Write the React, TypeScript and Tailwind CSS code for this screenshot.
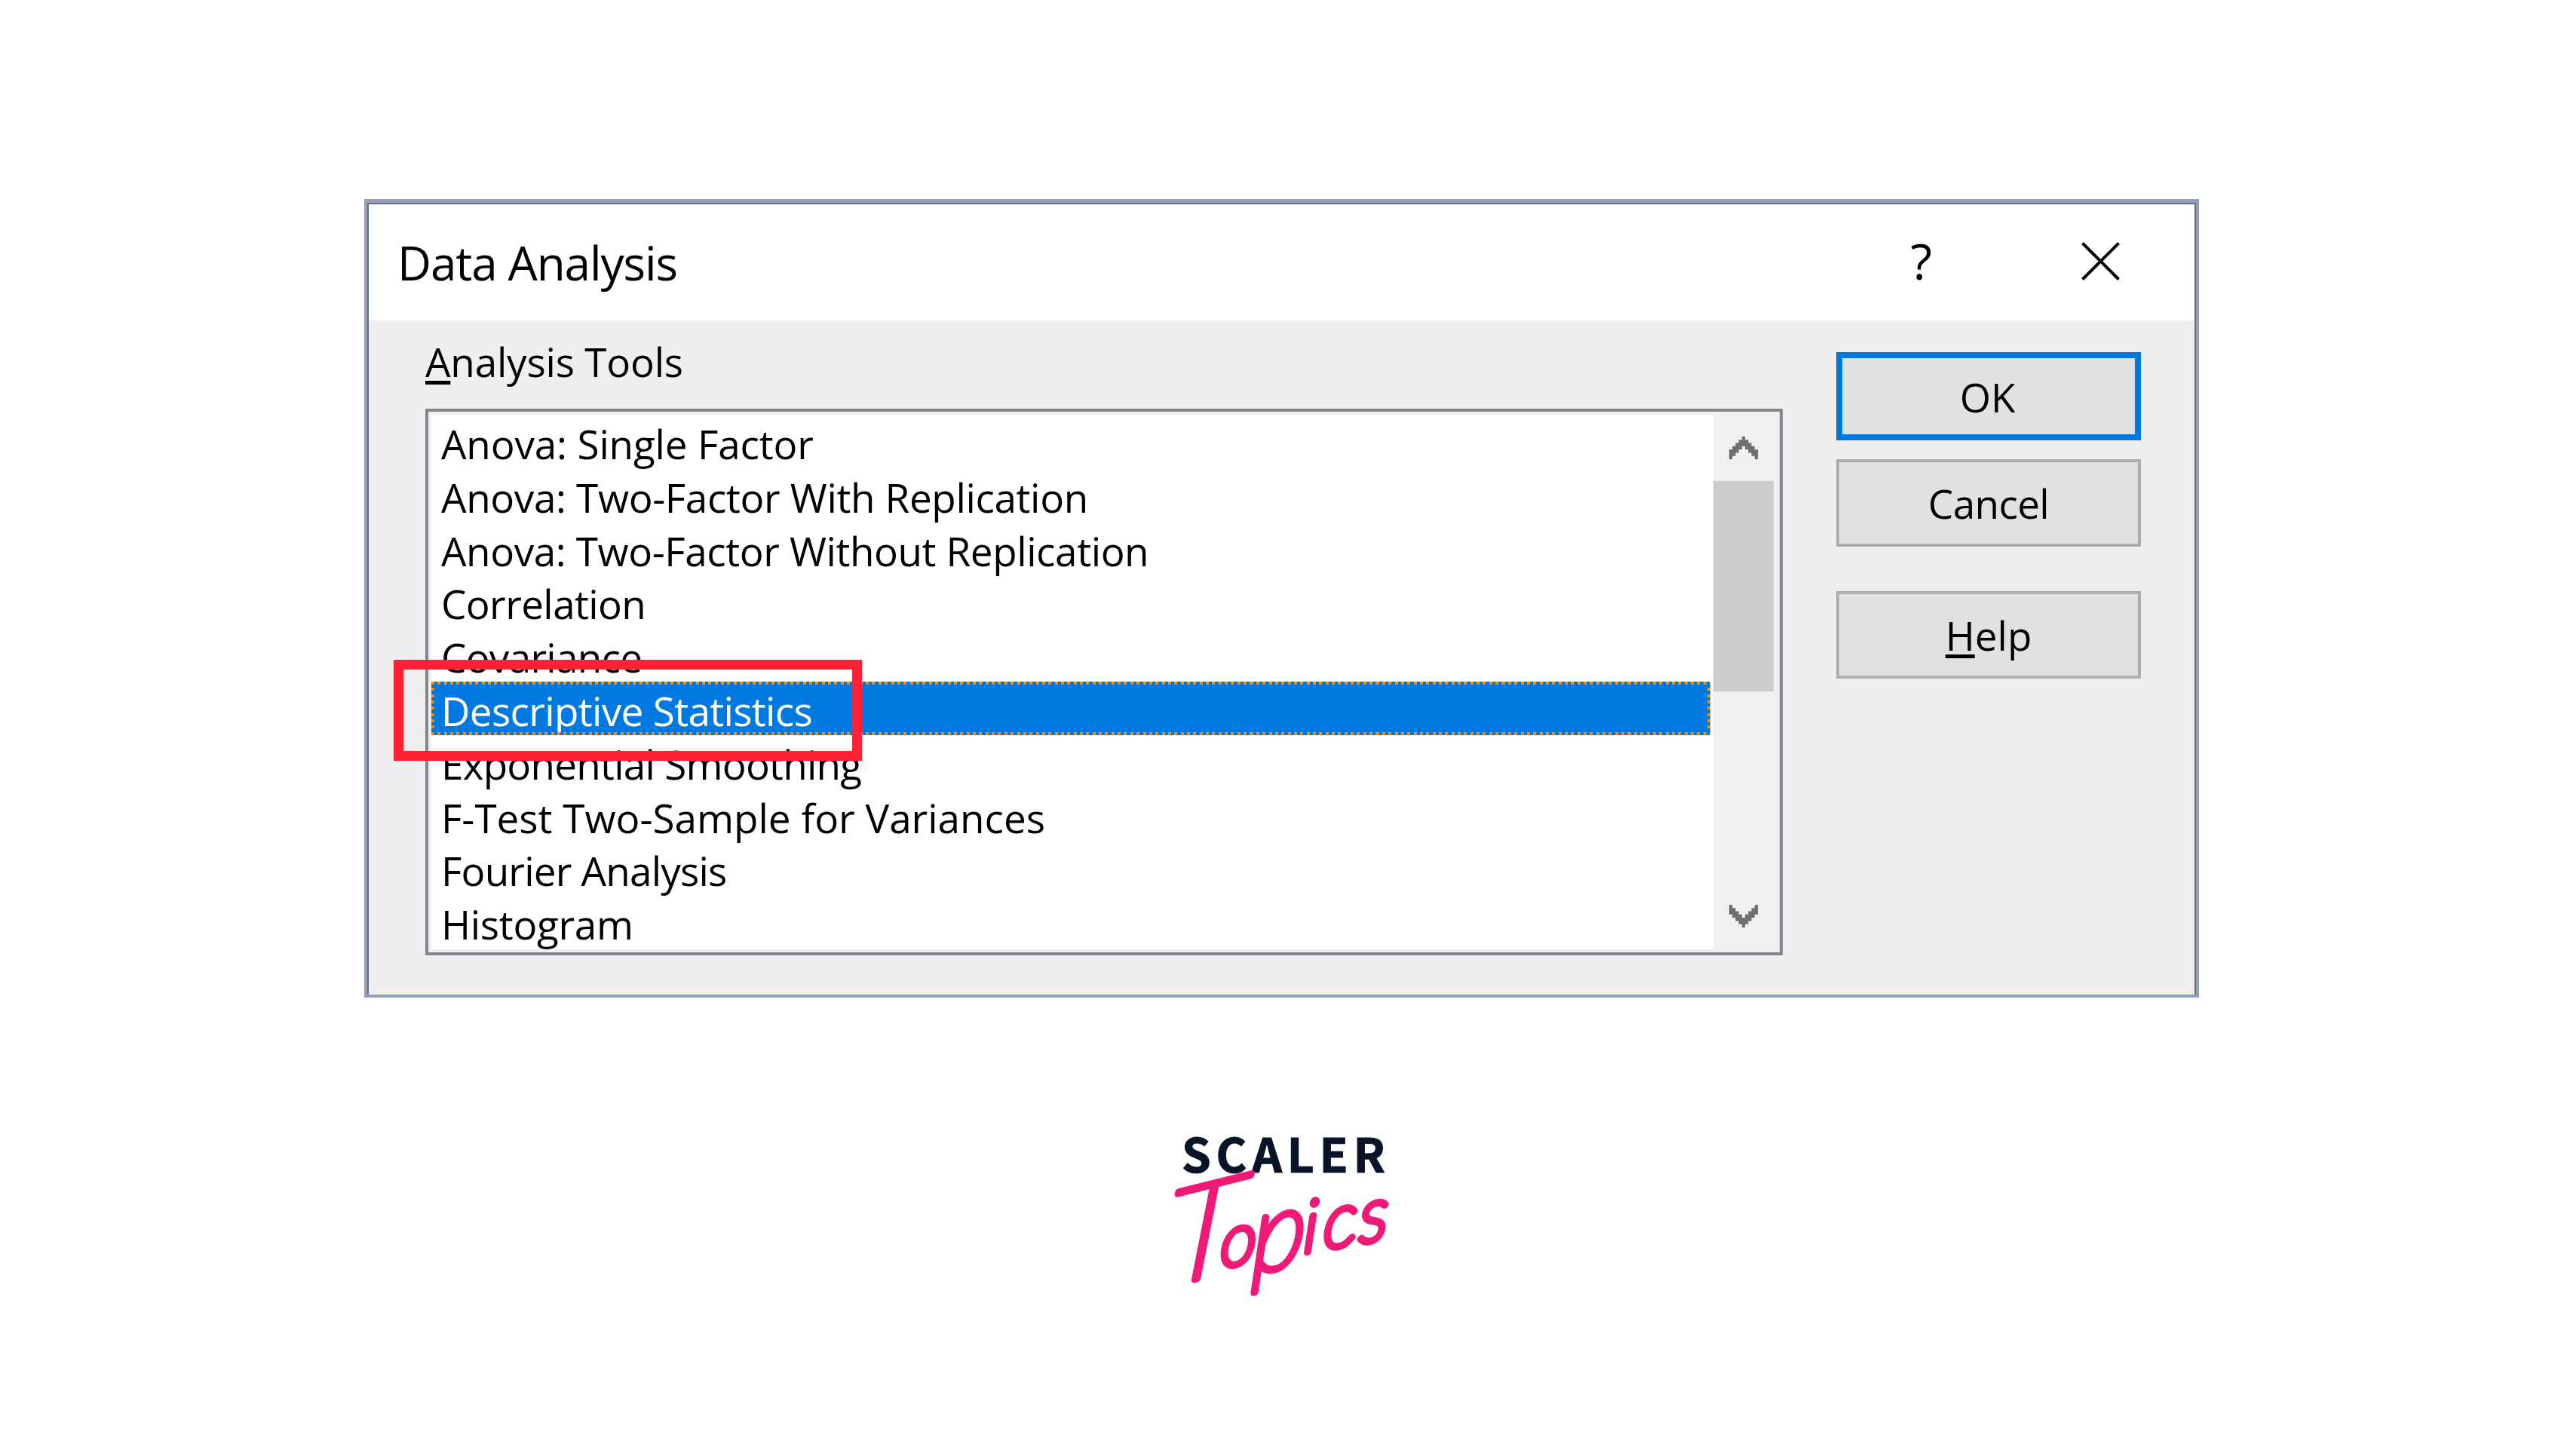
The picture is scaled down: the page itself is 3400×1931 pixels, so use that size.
import clsx from "clsx";
import type { ReactNode } from "react";

const tools = [
    { name: "Anova: Single Factor", tracking: "tracking-[-0.15px]" },
    { name: "Anova: Two-Factor With Replication", tracking: "tracking-[-0.35px]" },
    { name: "Anova: Two-Factor Without Replication", tracking: "tracking-[-0.4px]" },
    { name: "Correlation", tracking: "tracking-[-0.6px]" },
    { name: "Covariance", tracking: "tracking-[-0.7px]" },
    { name: "Descriptive Statistics", tracking: "tracking-[-0.65px]" },
    { name: "Exponential Smoothing", tracking: "tracking-[-0.75px]" },
    { name: "F-Test Two-Sample for Variances", tracking: "tracking-normal" },
    { name: "Fourier Analysis", tracking: "tracking-[-0.8px]" },
    { name: "Histogram", tracking: "tracking-[-0.3px]" },
];

const ROW_DOTS = "h-1 shrink-0 bg-[repeating-linear-gradient(90deg,#f08a1e_0px,#f08a1e_4px,#1a70b4_4px,#1a70b4_8.35px)]";
const COLUMN_DOTS = "w-1 shrink-0 bg-[repeating-linear-gradient(180deg,#1a70b4_0px,#1a70b4_4.35px,#f08a1e_4.35px,#f08a1e_8.35px)]";

const ScrollArrow = ({ down = false }: { down?: boolean }) => (
    <div className="h-[88px] flex justify-center items-center">
        <svg className={clsx("w-[38px] h-[30px]", down && "rotate-180")} viewBox="0 0 9 7" preserveAspectRatio="none" fill="#6f6f6f">
            <path d="M4 0H5V1H6V2H7V3H8V4H9V7H8V6H7V5H6V4H5V3H4V4H3V5H2V6H1V7H0V4H1V3H2V2H3V1H4Z" />
        </svg>
    </div>
);

const Underlined = ({ children }: { children: ReactNode }) => (
    <span className="underline decoration-[5px] underline-offset-[5px]">{children}</span>
);

const DialogButton = ({ children, className }: { children: ReactNode, className: string }) => (
    <button className={clsx("w-full h-[116px] flex justify-center items-center pt-[2px] bg-[#e1e1e1]", className)}>
        <span>{children}</span>
    </button>
);

const ToolItem = ({ name, tracking, selected }: { name: string, tracking: string, selected: boolean }) => {
    if (selected) {
        return (
            <li className="h-[70.8px] flex flex-col bg-[#007ae0] text-white">
                <div className={ROW_DOTS}></div>
                <div className="flex-1 min-h-0 flex">
                    <div className={COLUMN_DOTS}></div>
                    <span className={clsx("flex-1 pl-[9px] pt-[2px] leading-[65px] whitespace-nowrap", tracking)}>{name}</span>
                    <div className={COLUMN_DOTS}></div>
                </div>
                <div className={ROW_DOTS}></div>
            </li>
        )
    }

    return (
        <li className={clsx("h-[70.8px] pl-[13px] pt-[6px] leading-[65px] whitespace-nowrap", tracking)}>{name}</li>
    )
};

const Logo = () => (
    <svg className="w-[340px] h-[280px] ml-[1530px] mt-[157px] overflow-visible" viewBox="0 0 340 280">
        <text x="37" y="75.3" fill="#0a1428" stroke="#0a1428" strokeWidth="1.2" fontSize="62" fontWeight="700" letterSpacing="6.9" fontFamily="'Noto Sans CJK JP', sans-serif">SCALER</text>
        <g fill="#ed1a78" stroke="#ed1a78" strokeWidth="9" strokeLinejoin="round" strokeLinecap="round" fontStyle="italic" fontWeight="100" fontFamily="Lato, sans-serif">
            <text transform="translate(13 227) rotate(-14) skewX(-18) scale(1.18 1)" fontSize="168">T</text>
            <text transform="translate(88 201) rotate(-10) skewX(-12)" fontSize="94">
                <tspan x="0" y="0">o</tspan>
                <tspan x="43" y="15" fontSize="142">p</tspan>
                <tspan x="112" y="0">i</tspan>
                <tspan x="139" y="0" fontSize="98">c</tspan>
                <tspan x="187" y="0" fontSize="98">s</tspan>
            </text>
        </g>
    </svg>
);

const App = () => {
    return (
        <div className="w-[3400px] h-[1931px] pt-[264px] bg-white text-black font-['Open_Sans',sans-serif] text-[53px] overflow-hidden">
            <div className="relative w-[2433px] h-[1059px] ml-[483px] border-4 border-t-[5px] border-[#92a1b6]">
                <div className="h-full flex flex-col border-t-2 border-x-2 border-[#6c6d72] bg-[#efefef]">
                    <div className="h-[154px] shrink-0 flex items-center pl-[38px] pr-[99px] bg-white">
                        <h1 className="text-[62px] tracking-[-1.1px]">Data Analysis</h1>
                        <span className="ml-auto mr-[198px] pb-[6px] text-[66px] leading-none">?</span>
                        <svg className="w-[51px] h-[51px] mb-1" viewBox="0 0 51 51" stroke="#000" strokeWidth="4">
                            <path d="M1.5 1.5L49.5 49.5M49.5 1.5L1.5 49.5" />
                        </svg>
                    </div>
                    <div className="flex pl-[75px]">
                        <div className="w-[1800px] pt-[18px]">
                            <div className="h-[99px] pt-px leading-[72px] tracking-[-0.2px]"><Underlined>A</Underlined>nalysis Tools</div>
                            <div className="h-[725px] flex border-4 border-[#83868f] bg-[#f0f0f0] py-1 pl-1">
                                <ul className="w-[1700px] pr-1 bg-white">
                                    {tools.map(tool => (
                                        <ToolItem key={tool.name} {...tool} selected={tool.name === "Descriptive Statistics"} />
                                    ))}
                                </ul>
                                <div className="w-20 flex flex-col">
                                    <ScrollArrow />
                                    <div className="h-[279px] bg-[#cdcdcd]"></div>
                                    <div className="flex-1"></div>
                                    <ScrollArrow down />
                                </div>
                            </div>
                        </div>
                        <div className="w-[404px] ml-[71px] pt-[42px] flex flex-col">
                            <DialogButton className="h-[117px] pr-[3px] border-8 border-[#0078dc]">OK</DialogButton>
                            <DialogButton className="mt-[25px] border-4 border-[#adadad] tracking-[-0.6px]">Cancel</DialogButton>
                            <DialogButton className="mt-[59px] border-4 border-[#adadad]"><Underlined>H</Underlined>elp</DialogButton>
                        </div>
                    </div>
                </div>
                {/* highlight around the selected tool */}
                <div className="absolute left-[35px] top-[606px] w-[621px] h-[134px] border-[13px] border-[#ff2236]"></div>
            </div>
            <Logo />
        </div>
    );
}

export default App;
